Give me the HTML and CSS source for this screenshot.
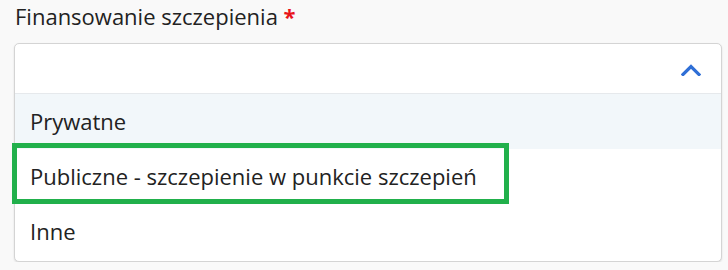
FILE: index.html
```html
<!DOCTYPE html>
<html lang="pl">
  <head>
    <meta charset="utf-8" />
    <title>Finansowanie szczepienia</title>
    <link rel="stylesheet" href="styles.css">
  </head>
  <body>
    <div class="field">
      <label class="field-label">Finansowanie szczepienia <span class="required">*</span></label>

      <div class="select">
        <div class="select-input">
          <svg class="chevron" width="20" height="12" viewBox="0 0 20 12">
            <path d="M2 10.5 L10 2.5 L18 10.5" fill="none" stroke="#2f6fd6" stroke-width="3.2" stroke-linecap="square" stroke-linejoin="miter"/>
          </svg>
        </div>
        <ul class="options">
          <li class="option option-hover">Prywatne</li>
          <li class="option">
            Publiczne - szczepienie w punkcie szczepień
            <span class="highlight"></span>
          </li>
          <li class="option">Inne</li>
        </ul>
      </div>
    </div>
  </body>
</html>
```

FILE: styles.css
```css
body {
  margin: 0;
  background-color: #f9f9f9;
  font-family: "Open Sans", "Noto Sans", sans-serif;
  color: #222;
}

.field {
  padding: 1px 8px 0 14px;
}

.field-label {
  display: block;
  font-size: 22px;
  line-height: 30px;
  padding-left: 1px;
  color: #222;
}

.required {
  color: #e8141b;
  font-weight: 700;
}

.select {
  margin-top: 12px;
  width: 706px;
  background: white;
  border: 1px solid #d4d4d4;
  border-radius: 5px;
  box-shadow: 0 1px 2px rgba(0, 0, 0, 0.12);
}

.select-input {
  height: 49px;
  border-bottom: 1px solid #e6e9ec;
  display: flex;
  align-items: center;
  justify-content: flex-end;
  padding-right: 20px;
}

.chevron {
  margin-top: 2px;
}

.options {
  list-style: none;
  margin: 0;
  padding: 0 0 2px;
}

.option {
  position: relative;
  font-size: 22px;
  line-height: 30px;
  padding: 12px 15px 13px;
  color: #222;
}

.option-hover {
  background-color: #f2f7fa;
}

.highlight {
  position: absolute;
  top: -6px;
  left: -3px;
  width: 487px;
  height: 51px;
  border: 5px solid #21b04b;
}
```
